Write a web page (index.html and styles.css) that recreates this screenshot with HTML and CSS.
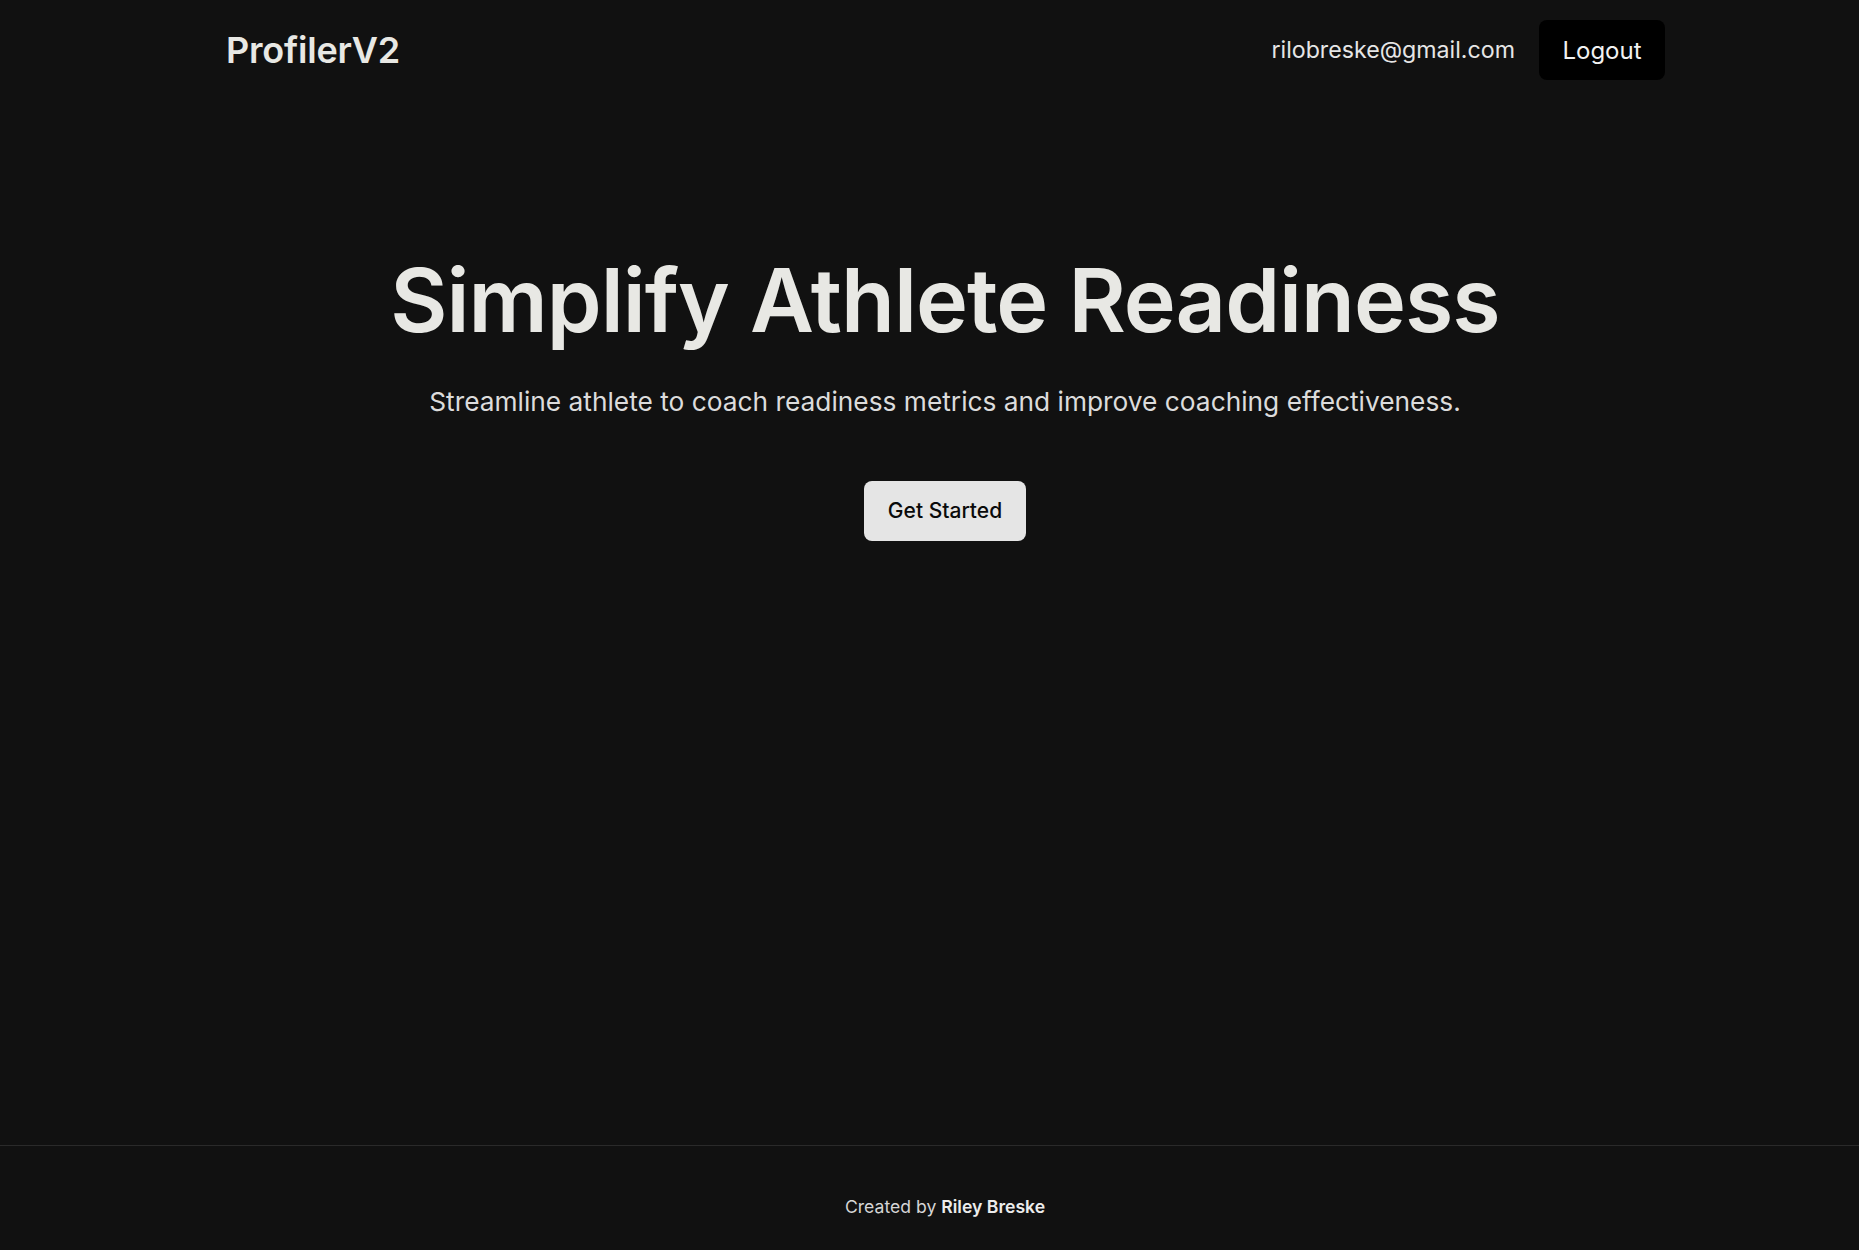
FILE: index.html
```html
<!DOCTYPE html>
<html lang="en">
<head>
<meta charset="utf-8">
<title>ProfilerV2</title>
<link rel="stylesheet" href="styles.css">
</head>
<body>
<div class="page">
  <header class="topbar">
    <div class="brand">ProfilerV2</div>
    <div class="account">
      <span class="email">rilobreske@gmail.com</span>
      <button class="logout">Logout</button>
    </div>
  </header>
  <main class="hero">
    <h1 class="title">Simplify Athlete Readiness</h1>
    <p class="subtitle">Streamline athlete to coach readiness metrics and improve coaching effectiveness.</p>
    <button class="cta">Get Started</button>
  </main>
  <footer class="footer">
    <p class="credit">Created by <strong>Riley Breske</strong></p>
  </footer>
</div>
</body>
</html>
```
FILE: styles.css
```css
* { box-sizing: border-box; }
html, body { margin: 0; padding: 0; background: #111111; }
body {
  font-family: Inter, "Noto Sans", sans-serif;
  color: #e8e8e4;
}
.page {
  min-height: 100vh;
  display: flex;
  flex-direction: column;
}
.topbar {
  height: 100px;
  display: flex;
  align-items: center;
  justify-content: space-between;
  padding: 0 194px 0 226px;
}
.brand {
  font-size: 36px;
  font-weight: 600;
  letter-spacing: -0.2px;
}
.account {
  display: flex;
  align-items: center;
  gap: 24px;
}
.email {
  font-size: 23.2px;
  font-weight: 400;
  color: #e6e6e6;
}
.logout {
  height: 60px;
  width: 126px;
  border: none;
  border-radius: 8px;
  background: #000;
  color: #f2f2f2;
  font-family: inherit;
  font-size: 24px;
  font-weight: 400;
}
.hero {
  flex: 1;
  display: flex;
  flex-direction: column;
  align-items: center;
  padding-top: 148px;
  padding-left: 31px;
}
.title {
  margin: 0;
  font-size: 88px;
  font-weight: 600;
  line-height: 1.2;
  letter-spacing: -1px;
  color: #e8e8e4;
}
.subtitle {
  margin: 32px 0 0;
  font-size: 26.3px;
  font-weight: 400;
  color: #dcdcdc;
}
.cta {
  margin-top: 64px;
  height: 60px;
  width: 162px;
  border: none;
  border-radius: 8px;
  background: #e5e5e5;
  color: #0a0a0a;
  font-family: inherit;
  font-size: 21px;
  font-weight: 500;
}
.footer {
  height: 105px;
  border-top: 1px solid #2a2a2a;
  display: flex;
  align-items: center;
  justify-content: center;
  padding-left: 31px;
  padding-top: 16px;
}
.credit {
  margin: 0;
  font-size: 17.6px;
  color: #d6d6d6;
}
.credit strong {
  font-weight: 600;
  color: #ececec;
}
```
